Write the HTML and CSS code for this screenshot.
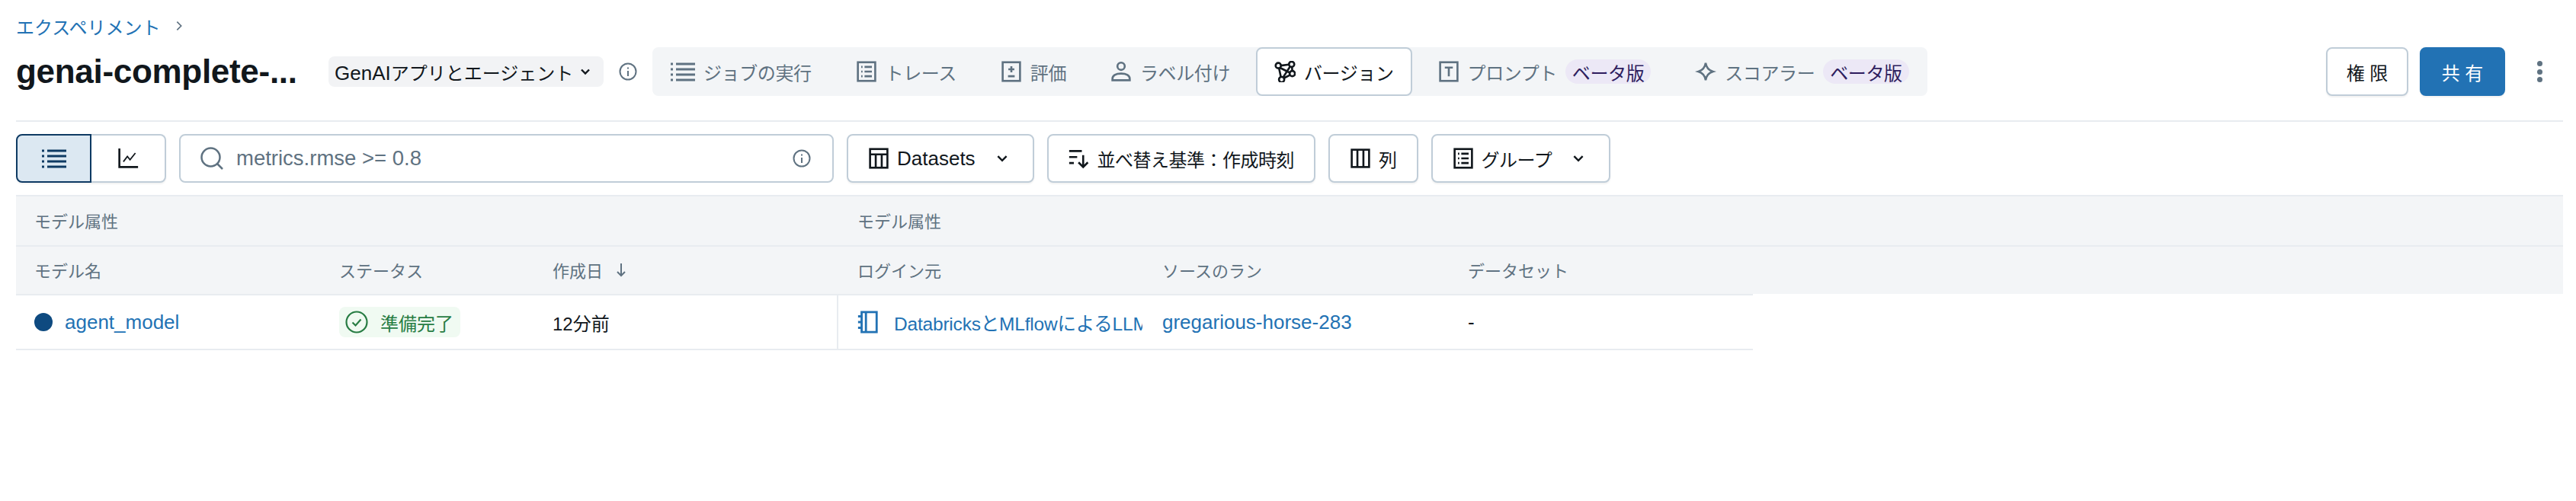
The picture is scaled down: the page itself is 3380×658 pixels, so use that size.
FILE: index.html
```html
<!DOCTYPE html>
<html lang="ja">
<head>
    <meta charset="UTF-8">
    <title>genai-complete-demo</title>
    <link rel="stylesheet" href="styles.css">
</head>
<body>
    <div class="page">
        <div class="breadcrumb">
            <a class="link">エクスペリメント</a>
            <svg class="crumb-arrow" viewBox="0 0 12 20"><path d="M2 2l8 8-8 8" /></svg>
        </div>

        <header class="title-row">
            <h1>genai-complete-...</h1>
            <div class="type-pill">
                <span><span class="lat">GenAI</span>アプリとエージェント</span>
                <svg class="chevron-sm" viewBox="0 0 16 16"><path d="M3 5.500l5 5 5-5" /></svg>
            </div>
            <svg class="info" viewBox="0 0 24 24"><circle cx="12" cy="12" r="10.500" /><path d="M12 11v7M12 6.500v2" /></svg>

            <nav class="tabs">
                <div class="tab">
                    <svg class="icon wide-icon" viewBox="0 0 32 28"><path d="M7 4h25M7 11h25M7 18h25M7 25h25M0 4h3M0 11h3M0 18h3M0 25h3" /></svg>
                    ジョブの実行
                </div>
                <div class="tab">
                    <svg class="icon" viewBox="0 0 32 32"><rect x="3" y="2" width="26" height="28" /><path d="M13 9h11M13 16h11M13 23h11M8 9h2M8 16h2M8 23h2" /></svg>
                    トレース
                </div>
                <div class="tab">
                    <svg class="icon" viewBox="0 0 32 32"><rect x="3" y="2" width="26" height="28" /><path d="M16 8v9M11.500 12.500h9M11 23h10" /></svg>
                    評価
                </div>
                <div class="tab">
                    <svg class="icon" viewBox="0 0 32 32"><circle cx="16" cy="8" r="5.500" /><path d="M3 29v-2c0-5 5-8 13-8s13 3 13 8v2z" /></svg>
                    ラベル付け
                </div>
                <div class="tab active">
                    <svg class="icon" viewBox="0 0 32 32"><circle cx="6" cy="7" r="4" /><circle cx="26" cy="5" r="4" /><circle cx="27" cy="19" r="4" /><circle cx="11" cy="28" r="4" /><path d="M10 7l12-1.500M8 10l16 8M24 8l-11 17M7 10.500l3 14M14 26l10-5M26.500 9l.5 6" /></svg>
                    バージョン
                </div>
                <div class="tab">
                    <svg class="icon" viewBox="0 0 32 32"><rect x="3" y="2" width="26" height="28" /><path d="M10 10h12M16 10v13" /></svg>
                    プロンプト
                    <span class="beta">ベータ版</span>
                </div>
                <div class="tab">
                    <svg class="icon" viewBox="0 0 32 32"><path d="M16 3c1 7 4 11 11 13-7 2-10 6-11 13-1-7-4-11-11-13 7-2 10-6 11-13z" /></svg>
                    スコアラー
                    <span class="beta">ベータ版</span>
                </div>
            </nav>

            <div class="actions">
                <button class="btn spaced">権 限</button>
                <button class="btn primary spaced">共 有</button>
                <div class="kebab"><span></span><span></span><span></span></div>
            </div>
        </header>

        <div class="toolbar">
            <div class="segmented">
                <div class="seg selected">
                    <svg class="icon wide-icon" viewBox="0 0 32 28"><path d="M7 4h25M7 11h25M7 18h25M7 25h25M0 4h3M0 11h3M0 18h3M0 25h3" /></svg>
                </div>
                <div class="seg">
                    <svg class="icon" viewBox="0 0 32 32"><path d="M3 1v28h28" /><path class="thin" d="M9 21l6-8 4 5 8-10" /></svg>
                </div>
            </div>

            <div class="search">
                <svg class="search-icon" viewBox="0 0 32 32"><circle cx="14.500" cy="14.500" r="12" /><path d="M23 23l7 7" /></svg>
                <span class="search-text">metrics.rmse &gt;= 0.8</span>
                <svg class="info" viewBox="0 0 24 24"><circle cx="12" cy="12" r="10.500" /><path d="M12 11v7M12 6.500v2" /></svg>
            </div>

            <button class="btn tool">
                <svg class="icon" viewBox="0 0 32 32"><rect x="3" y="2" width="26" height="28" /><path d="M3 10h26M11.500 10v20M20.500 10v20" /></svg>
                <span class="lat">Datasets</span>
                <svg class="chevron" viewBox="0 0 16 16"><path d="M3 5.500l5 5 5-5" /></svg>
            </button>
            <button class="btn tool">
                <svg class="icon" viewBox="0 0 32 32"><path d="M1 5h19M1 14h12M1 23h7M22 11v18M15 22l7 7 7-7" /></svg>
                並べ替え基準：作成時刻
            </button>
            <button class="btn tool">
                <svg class="icon" viewBox="0 0 32 32"><rect x="3" y="3" width="26" height="26" /><path d="M11.500 3v26M20.500 3v26" /></svg>
                列
            </button>
            <button class="btn tool">
                <svg class="icon" viewBox="0 0 32 32"><rect x="3" y="2" width="26" height="28" /><path d="M13 9h11M13 16h11M13 23h11M8 9h2M8 16h2M8 23h2" /></svg>
                グループ
                <svg class="chevron" viewBox="0 0 16 16"><path d="M3 5.500l5 5 5-5" /></svg>
            </button>
        </div>

        <div class="table">
            <div class="head-row group-row">
                <div class="cell group-first">モデル属性</div>
                <div class="cell">モデル属性</div>
            </div>
            <div class="head-row cols">
                <div class="cell">モデル名</div>
                <div class="cell">ステータス</div>
                <div class="cell">作成日
                    <svg class="sort-arrow" viewBox="0 0 16 20"><path d="M8 2v16M3 13l5 5 5-5" /></svg>
                </div>
                <div class="cell login-cell">ログイン元</div>
                <div class="cell">ソースのラン</div>
                <div class="cell">データセット</div>
            </div>
            <div class="body-row cols">
                <div class="cell name-cell"><span class="dot"></span><a class="link lat">agent_model</a></div>
                <div class="cell">
                    <span class="status">
                        <svg viewBox="0 0 30 30"><circle cx="15" cy="15" r="13.500" /><path d="M9.500 15.500l4 4 7-8" /></svg>
                        準備完了
                    </span>
                </div>
                <div class="cell body-text">12分前</div>
                <div class="cell login-cell source-cell">
                    <svg class="notebook" viewBox="0 0 28 32"><rect x="5" y="2" width="21" height="28" /><path d="M11 2v28M0 8h5M0 16h5M0 24h5" /></svg>
                    <a class="link clipped">DatabricksとMLflowによるLLM</a>
                </div>
                <div class="cell"><a class="link lat">gregarious-horse-283</a></div>
                <div class="cell lat">-</div>
            </div>
        </div>
    </div>
</body>
</html>
```

FILE: styles.css
```css
* {
    box-sizing: border-box;
}
body {
    margin: 0;
    background: #fff;
    color: #11171c;
    font-family: "Liberation Sans", "Noto Sans CJK JP", sans-serif;
    font-size: 24px;
}
svg {
    flex: none;
}
.page {
    padding: 0 17px 0 21px;
    height: 658px;
    overflow: hidden;
}
.link {
    color: #2272b4;
}
.lat {
    font-size: 26px;
    letter-spacing: 0;
}

/* header */
.breadcrumb {
    display: flex;
    align-items: center;
    gap: 20px;
    height: 36px;
    margin-top: 16px;
}
.crumb-arrow {
    width: 8px;
    height: 14px;
    fill: none;
    stroke: #5f7281;
    stroke-width: 2.500;
}
.title-row {
    display: flex;
    align-items: center;
    height: 64px;
    margin-top: 10px;
}
h1 {
    margin: 0;
    width: 410px;
    font-size: 44px;
    font-weight: 700;
    letter-spacing: -0.3px;
    white-space: nowrap;
}
.type-pill {
    display: flex;
    align-items: center;
    justify-content: space-between;
    width: 361px;
    height: 40px;
    padding: 0 16px 0 8px;
    background: #f2f3f5;
    border-radius: 8px;
    white-space: nowrap;
}
.chevron-sm {
    width: 16px;
    height: 16px;
    fill: none;
    stroke: #11171c;
    stroke-width: 2.400;
}
.info {
    width: 24px;
    height: 24px;
    fill: none;
    stroke: #5f7281;
    stroke-width: 2;
}
.title-row > .info {
    margin: 0 20px;
}
.tabs {
    display: flex;
    align-items: stretch;
    gap: 10px;
    height: 64px;
    background: #f3f5f7;
    border-radius: 8px;
}
.tab {
    display: flex;
    align-items: center;
    gap: 11px;
    padding: 0 24px;
    color: #5f7281;
    letter-spacing: -0.4px;
    white-space: nowrap;
}
.tab.active {
    background: #fff;
    color: #11171c;
    border: 2px solid #c0cdd8;
    border-radius: 8px;
    padding: 0 22px;
}
.icon {
    width: 28px;
    height: 28px;
    fill: none;
    stroke: currentColor;
    stroke-width: 3;
}
.wide-icon {
    width: 32px;
}
.thin {
    stroke-width: 2;
}
.beta {
    display: flex;
    align-items: center;
    height: 32px;
    padding: 0 9px;
    background: #ece8f6;
    color: #2e1d5e;
    border-radius: 16px;
}
.actions {
    display: flex;
    align-items: center;
    gap: 15px;
    margin-left: auto;
}
.btn {
    display: flex;
    align-items: center;
    gap: 10px;
    height: 64px;
    padding: 0 26px;
    background: #fff;
    color: #11171c;
    border: 2px solid #c0cdd8;
    border-radius: 8px;
    box-shadow: 0 2px 2px rgba(0, 0, 0, 0.05);
    font: inherit;
    letter-spacing: -0.5px;
    white-space: nowrap;
}
.btn.spaced {
    width: 108px;
    justify-content: center;
    padding: 0;
    letter-spacing: 0;
}
.btn.primary {
    width: 112px;
    background: #2272b4;
    border-color: #2272b4;
    color: #fff;
}
.kebab {
    display: flex;
    flex-direction: column;
    gap: 3.500px;
    margin: 0 27px 0 27px;
}
.kebab span {
    width: 7px;
    height: 7px;
    background: #5f7281;
    border-radius: 50%;
}

/* toolbar */
.toolbar {
    display: flex;
    align-items: center;
    gap: 17px;
    margin-top: 32px;
    padding-top: 16px;
    border-top: 2px solid #e8ecf0;
}
.segmented {
    display: flex;
    height: 64px;
}
.seg {
    display: flex;
    align-items: center;
    justify-content: center;
    width: 98px;
    background: #fff;
    border: 2px solid #c0cdd8;
    border-left: 0;
    border-radius: 0 8px 8px 0;
    box-shadow: 0 2px 2px rgba(0, 0, 0, 0.05);
}
.seg.selected {
    width: 99px;
    background: #dce8f2;
    color: #0e3a63;
    border: 2px solid #0e3a63;
    border-radius: 8px 0 0 8px;
}
.search {
    display: flex;
    align-items: center;
    gap: 16px;
    width: 859px;
    height: 64px;
    padding: 0 28px 0 25px;
    border: 2px solid #c0cdd8;
    border-radius: 8px;
    color: #5f7281;
}
.search-icon {
    width: 32px;
    height: 32px;
    fill: none;
    stroke: #5f7281;
    stroke-width: 2.500;
}
.search-text {
    flex: 1;
    font-size: 27.500px;
}
.chevron {
    width: 18px;
    height: 18px;
    margin: 0 5px 0 16px;
    fill: none;
    stroke: #11171c;
    stroke-width: 2.200;
}

/* table */
.table {
    margin-top: 16px;
    font-size: 22px;
}
.head-row {
    background: #f3f5f7;
    color: #5f7281;
    border-top: 2px solid #e8ecf0;
}
.group-row {
    display: flex;
    height: 66px;
    padding-bottom: 2px;
}
.group-first {
    width: 1080px;
}
.cols {
    display: grid;
    grid-template-columns: 400px 280px 397px 403px 401px 398px;
}
.head-row.cols {
    height: 64px;
    padding-bottom: 2px;
}
.body-row {
    width: 2279px;
    height: 74px;
    border-top: 2px solid #e8ecf0;
    border-bottom: 2px solid #e8ecf0;
    color: #11171c;
}
.cell {
    display: flex;
    align-items: center;
    gap: 10px;
    min-width: 0;
    padding-left: 24px;
    white-space: nowrap;
}
.login-cell {
    padding-left: 27px;
}
.body-text {
    font-size: 24px;
}
.sort-arrow {
    width: 16px;
    height: 20px;
    margin-left: 6px;
    fill: none;
    stroke: #5f7281;
    stroke-width: 2;
}
.name-cell {
    gap: 16px;
}
.dot {
    width: 24px;
    height: 24px;
    background: #0e4a80;
    border-radius: 50%;
}
.status {
    display: flex;
    align-items: center;
    gap: 16px;
    height: 40px;
    padding: 0 9px 0 8px;
    background: #f0faf2;
    color: #277c43;
    border-radius: 8px;
    font-size: 24px;
}
.status svg {
    width: 30px;
    height: 30px;
    fill: none;
    stroke: #277c43;
    stroke-width: 2.200;
}
.source-cell {
    overflow: hidden;
    padding-left: 25px;
    padding-right: 2px;
    border-left: 2px solid #e8ecf0;
    font-size: 24.500px;
    letter-spacing: -0.2px;
}
.notebook {
    width: 28px;
    height: 30px;
    margin-right: 10px;
    fill: none;
    stroke: #2272b4;
    stroke-width: 3;
}
.clipped {
    overflow: hidden;
}
```
